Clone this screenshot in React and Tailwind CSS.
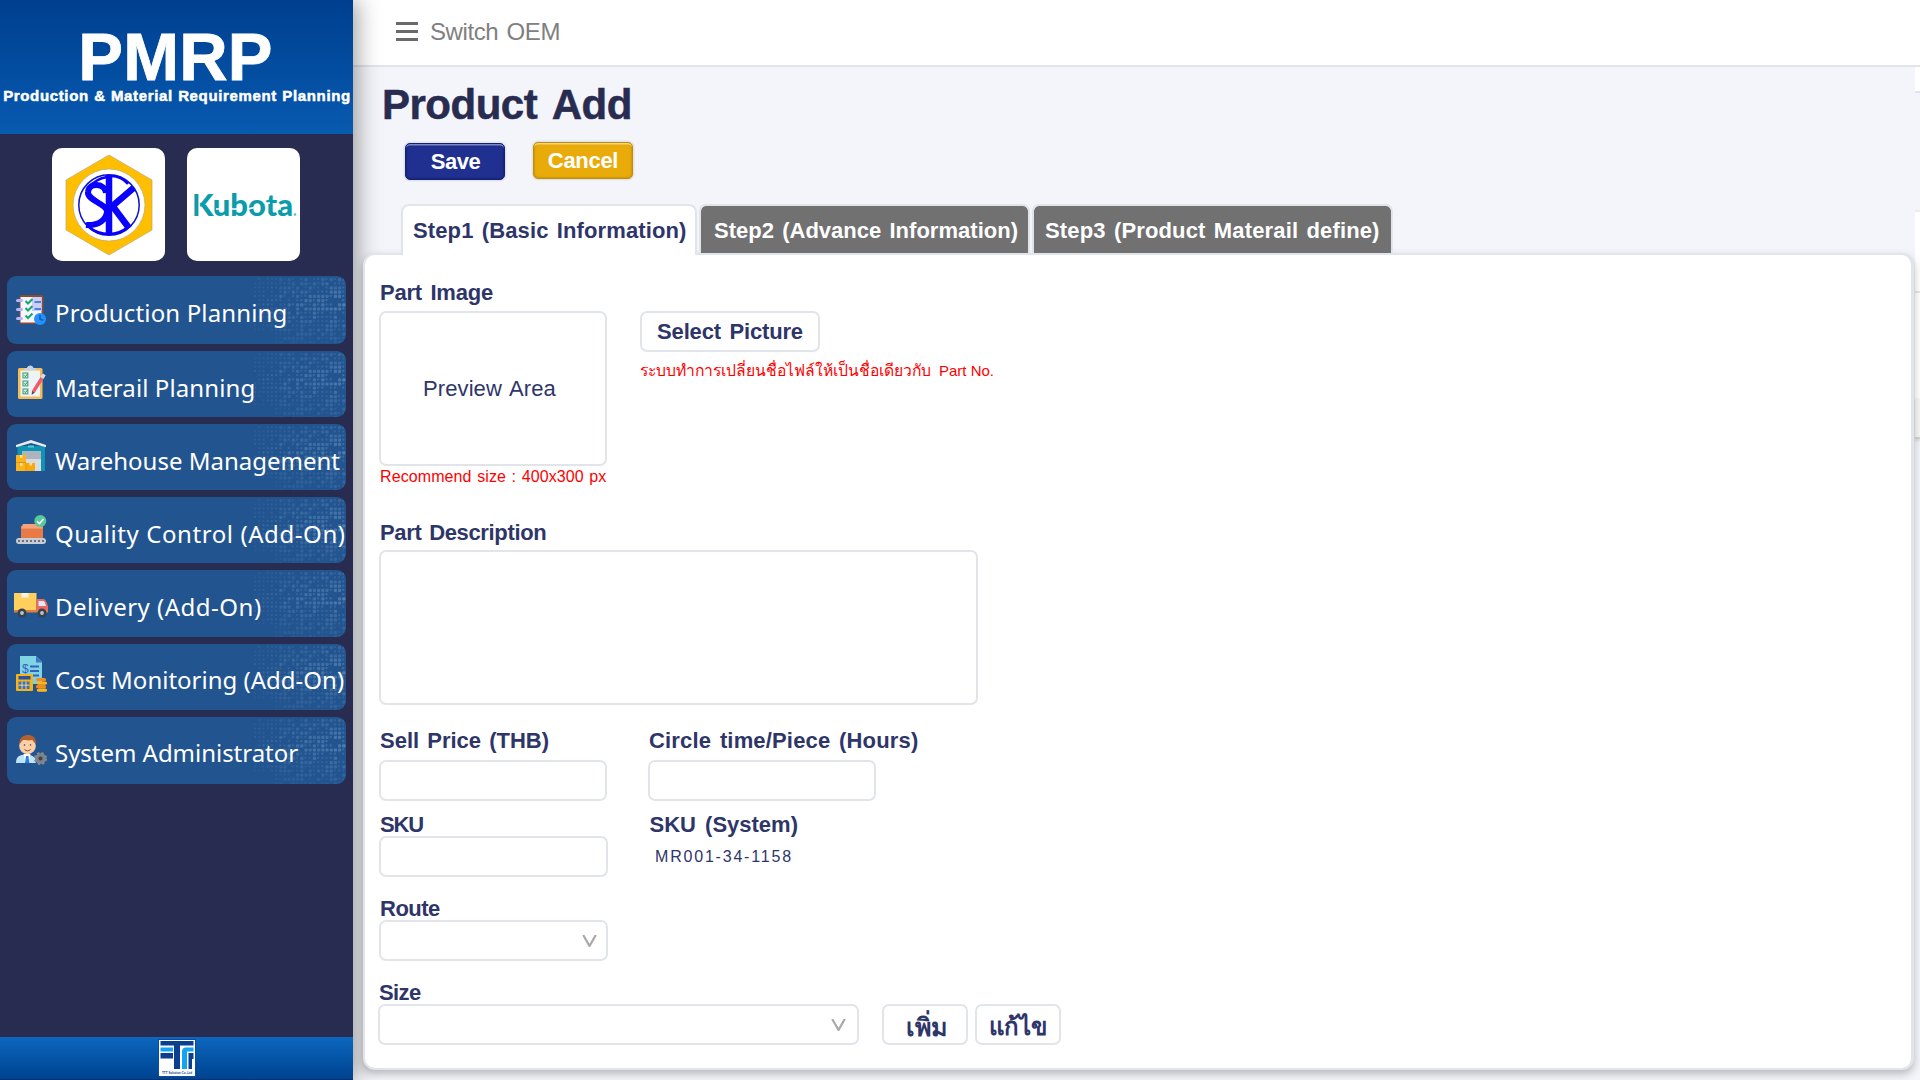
const ICONS = {
  production: (
    <svg viewBox="0 0 30 32" className="h-8 w-[30px]">
      <rect x="3.5" y="1" width="24" height="29" rx="2" fill="#8f4a2c" />
      <rect x="4.5" y="3" width="21" height="25.5" fill="#f7f5ff" />
      <path d="M16 3h9.500v14H16z" fill="#cfcdfb" />
      {[5, 14, 23].map((y) => (
        <rect key={y} x="0" y={y} width="7" height="3" rx="1.500" fill="#b9b5f5" />
      ))}
      {[7, 14, 21.5].map((y) => (
        <path key={y} d={`M9.500 ${y} l2.500 2.500 l4.500 -4.500`} fill="none" stroke="#17a866" strokeWidth="2" />
      ))}
      <path d="M18.500 8h6.500M18.500 15h6.500" stroke="#3f86ee" strokeWidth="2" />
      <circle cx="24" cy="25" r="6" fill="#2492fb" />
      <path d="M24 21v4.200l3.200 1" fill="none" stroke="#0c57c4" strokeWidth="1.500" />
    </svg>
  ),
  material: (
    <svg viewBox="0 0 30 34" className="h-[34px] w-[30px]">
      <rect x="2" y="3" width="24.500" height="31" rx="1.500" fill="#f4bb57" />
      <rect x="4.500" y="5.500" width="19.500" height="26" fill="#eef3f8" />
      <path d="M8 5c0-2 2-2 3-2 .5-3.500 6-3.500 6.500 0 1 0 3 0 3 2z" fill="#c3d5e6" />
      {[8, 16, 24].map((y) => (
        <g key={y}>
          <rect x="7" y={y} width="4.800" height="4.800" fill="#d4efe2" stroke="#5cab8c" strokeWidth="1.300" />
          <path d={`M8.200 ${y + 2.4} l1.200 1.200 l2-2.500`} fill="none" stroke="#2e8b66" />
        </g>
      ))}
      <path d="M17.500 26.500 26 13" stroke="#ef5a6c" strokeWidth="3.400" />
      <path d="M26 13l2.300-3.700" stroke="#d9dee6" strokeWidth="3.400" />
      <path d="M15.600 30l.5-4.300 2.800 1.800z" fill="#5d4a55" />
    </svg>
  ),
  warehouse: (
    <svg viewBox="0 0 30 32" className="h-8 w-[30px]">
      <path d="M1.500 6h27.500v25h-27.500z" fill="#0e93b4" />
      <path d="M0 5 15 0l15 5v2.300L15 3 0 7.300z" fill="#e6ecf1" />
      <path d="M12 6.500h6" stroke="#4fd0d6" strokeWidth="2" />
      <path d="M6 11h19v20H6z" fill="#d7dce1" />
      <path d="M6 11h19v8H6z" fill="#adb4bb" />
      <rect x="0" y="15" width="10" height="16" fill="#fbb51c" />
      <rect x="10" y="23" width="9" height="8" fill="#f8a90f" />
      <path d="M4 15h2.500v3H4zM4 23h2.500v3H4zM13.500 23h2.500v2.500h-2.500z" fill="#ffe08a" />
      <path d="M0 22.500h10M10 23v8" stroke="#dd8d0c" strokeWidth=".8" />
    </svg>
  ),
  quality: (
    <svg viewBox="0 0 31 30" className="h-[30px] w-[31px]">
      <path d="M5 11h22v13H5z" fill="#e87a47" />
      <path d="M7 9h18l2 4.500H5z" fill="#f6a37b" />
      <rect x="0" y="23" width="30" height="6" rx="3" fill="#c8ccd4" />
      {[3, 7, 11, 15, 19, 23, 27].map((x) => (
        <circle key={x} cx={x} cy="26" r="1.100" fill="#555b6b" />
      ))}
      <circle cx="24.300" cy="6" r="6" fill="#58c99b" />
      <path d="M21 6.200l2.500 2.500 4-4.700" fill="none" stroke="#fff" strokeWidth="1.500" />
    </svg>
  ),
  delivery: (
    <svg viewBox="0 0 34 26" className="h-[26px] w-[34px]">
      <path d="M0 1h22.500v19H0z" fill="#ffd05b" />
      <path d="M7.500 1h7v4.500h-7z" fill="#fbf3e0" />
      <path d="M22.500 7h7c2 0 4.500 6 4.500 8v5H22.500z" fill="#f4655f" />
      <path d="M24.500 9h5c1 0 2 3 2.500 5h-7.500z" fill="#d7eef8" />
      <path d="M0 18h34v2.500H0z" fill="#e0803c" />
      {[8, 28].map((x) => (
        <g key={x}>
          <circle cx={x} cy="21" r="4.500" fill="#37424f" />
          <circle cx={x} cy="21" r="1.900" fill="#b7c6d1" />
        </g>
      ))}
    </svg>
  ),
  cost: (
    <svg viewBox="0 0 31 36" className="h-9 w-[31px]">
      <path d="M4 0h16l6 6v22H4z" fill="#7fd4e4" />
      <path d="M20 0l6 6.500h-6z" fill="#3c74c9" />
      <path d="M14 10.500h9M14 15h9M17 19.500h6" stroke="#3561bd" strokeWidth="1.800" />
      <text x="6" y="16.500" fontFamily="Liberation Sans" fontSize="12" fill="#3561bd">$</text>
      <rect x="0" y="18" width="17" height="17" rx="1" fill="#f7b512" />
      <rect x="2.500" y="20" width="12" height="3.500" fill="#2b52a5" />
      <path d="M2.500 25.500h11v7.500h-11z" fill="#3c6fc0" />
      <path d="M6 25.500v7.500M10 25.500v7.500M2.500 29.200h11" stroke="#f1d884" />
      {[22, 25.5, 29, 32.5].map((y, i) => (
        <rect key={y} x={i % 2 ? 21 : 20} y={y} width="10" height="3.300" rx="1.600" fill={i % 2 ? "#ffb61a" : "#f98b18"} />
      ))}
    </svg>
  ),
  admin: (
    <svg viewBox="0 0 31 30" className="h-[30px] w-[31px]">
      <path d="M0 28c0-7 4-8 10-8.500 5 .5 10 1 10 8.500z" fill="#bfe4fa" />
      <path d="M7.500 19h7l-2 9h-3z" fill="#fff" />
      <path d="M10 21h2.500l.8 7H9z" fill="#2c7fdc" />
      <circle cx="11.500" cy="11" r="8.300" fill="#fbd0a8" />
      <path d="M3.500 9C3 2 8 0 12 0s8.500 2 8 9c-2-1-3-4-4-4-3 1-8 0-9 0-1.500 1-2 3-3.500 4z" fill="#b4602f" />
      <path d="M8.500 14.500c2 1.800 4 1.800 6 0" fill="none" stroke="#8a4a2a" />
      <circle cx="8.500" cy="10" r=".8" fill="#5a3520" />
      <circle cx="14.500" cy="10" r=".8" fill="#5a3520" />
      <circle cx="24.500" cy="23.500" r="5.300" fill="#8a8f94" stroke="#858a90" strokeWidth="2.600" strokeDasharray="2.300 1.900" />
      <circle cx="24.500" cy="23.500" r="4.200" fill="#7d8287" />
      <circle cx="24.500" cy="23.500" r="2" fill="#3e444b" />
    </svg>
  ),
};

const MENU = [
  { label: "Production Planning", icon: "production", box: "h-[68px]", ic: "mt-[18px] ml-[9px] w-[39px]", tx: "mt-[21px] tracking-[0.15px]" },
  { label: "Materail Planning", icon: "material", box: "h-[66px]", ic: "mt-3.5 ml-[9px] w-[39px]", tx: "mt-[21px] tracking-[0.1px]" },
  { label: "Warehouse Management", icon: "warehouse", box: "h-[66px]", ic: "mt-4 ml-[9px] w-[39px]", tx: "mt-[21px]" },
  { label: "Quality Control (Add-On)", icon: "quality", box: "h-[66px]", ic: "mt-[18px] ml-[9px] w-[39px]", tx: "mt-[21px] tracking-[0.58px]" },
  { label: "Delivery (Add-On)", icon: "delivery", box: "h-[67px]", ic: "mt-[22px] ml-[7px] w-[41px]", tx: "mt-[21px] tracking-[0.5px]" },
  { label: "Cost Monitoring (Add-On)", icon: "cost", box: "h-[66px]", ic: "mt-3 ml-[9px] w-[39px]", tx: "mt-5" },
  { label: "System Administrator", icon: "admin", box: "h-[67px]", ic: "mt-[18px] ml-[9px] w-[39px]", tx: "mt-5 tracking-[-0.03px]" },
];

const DOTS = [];
for (let c = 0; c < 22; c++) {
  for (let r = 0; r < 16; r++) {
    const n = Math.abs(Math.sin(c * 12.9898 + r * 78.233) * 43758.5453) % 1;
    const band = 1 - Math.abs(r - 6) / 13;
    const o = (0.17 + (c / 22) * 0.26) * band * (0.55 + n * 0.5);
    if (n > 0.1 && !(c < 5 && r > 12)) DOTS.push([c * 4.2 + 1, r * 4.2 + 2, o, n > 0.5 && c > 5 ? 3.2 : 2.2]);
  }
}

function Halftone() {
  return (
    <svg viewBox="0 0 93 67" className="absolute top-0 right-0 h-[67px] w-[93px]">
      {DOTS.map(([x, y, o, s], i) => (
        <rect key={i} x={x} y={y} width={s} height={s} rx="1" fill="#8fb6dc" opacity={o} />
      ))}
    </svg>
  );
}

function MenuItem({ item }) {
  return (
    <a className={`relative flex items-start overflow-hidden rounded-[9px] bg-[#22548f] ${item.box}`}>
      <Halftone />
      <span className={`shrink-0 ${item.ic}`}>{ICONS[item.icon]}</span>
      <span className={`relative whitespace-nowrap font-['Noto_Sans',sans-serif] text-2xl leading-8 text-white ${item.tx}`}>
        {item.label}
      </span>
    </a>
  );
}

function Sidebar() {
  return (
    <aside className="relative flex h-[1080px] w-[353px] shrink-0 flex-col bg-[#282c50] shadow-[4px_0_22px_rgba(0,0,0,0.38)]">
      <div className="flex h-[134px] shrink-0 flex-col items-center bg-gradient-to-b from-[#003f8f] to-[#085ab0] pt-8 whitespace-nowrap text-white">
        <div className="pr-0.5 text-[67px] leading-[50px] font-bold tracking-[0.2px] [-webkit-text-stroke:0.8px_white]">PMRP</div>
        <div className="mt-[5px] pl-px text-[15px] leading-[18px] font-bold tracking-[0.65px] [word-spacing:0.5px] [-webkit-text-stroke:0.5px_white]">
          Production &amp; Material Requirement Planning
        </div>
      </div>
      <div className="mt-3.5 flex gap-[22px] pl-[52px]">
        <div className="flex size-[113px] items-center justify-center rounded-[10px] bg-white">
          <svg viewBox="0 0 88 102" className="h-[102px] w-[88px]">
            <path d="M44 1 87 26v50L44 101 1 76V26z" fill="#ffbf00" stroke="#b9a878" strokeWidth=".7" />
            <circle cx="44" cy="51" r="36" fill="#fff" stroke="#b9a878" strokeWidth=".7" />
            <circle cx="44" cy="51" r="30.200" fill="#fff" stroke="#0d12c8" strokeWidth="1.500" />
            <g fill="none" stroke="#0a00ff">
              <path d="M44 21v60" strokeWidth="6.500" />
              <path d="M44 55 68.500 34M46 50l18 24" strokeWidth="6.500" />
              <path d="M41 39C40 29 24 28 23 38c-1 8 18 12 19 19 0 8-8 15-21 14" strokeWidth="6" />
              <path d="M23 34c6-7 12-10 19-11M46 22c7 0 13 3 17 8M24 73c6 5 12 7 20 7s13-2 19-7" strokeWidth="2.500" />
            </g>
          </svg>
        </div>
        <div className="flex size-[113px] items-center justify-center rounded-[10px] bg-white">
          <svg viewBox="0 0 112 44" className="h-11 w-28">
            <text x="4" y="33" fontFamily="Lato, sans-serif" fontWeight="900" fontSize="31" textLength="101" lengthAdjust="spacingAndGlyphs" fill="#0a9cab">Kubota</text>
            <path d="M11.300 9v25M28 26h6M43 26h6M60 26l8-2M82 20h-5M88 26h5" stroke="#fff" strokeWidth="1.700" />
            <circle cx="107" cy="31.500" r="1.300" fill="#5fb9c1" />
          </svg>
        </div>
      </div>
      <nav className="mt-[15px] flex flex-col gap-[7px] px-[7px]">
        {MENU.map((m) => (
          <MenuItem key={m.label} item={m} />
        ))}
      </nav>
      <div className="mt-auto flex h-[43px] shrink-0 justify-center border-b border-[#06336e] bg-gradient-to-b from-[#0d67be] to-[#004390] pt-0.5">
        <svg viewBox="0 0 38 38" className="size-[38px]">
          <path d="M0 0h38v38H0z" fill="#0a4b9c" />
          <path d="M1 1h36v36H1z" fill="#fff" />
          <path d="M2.500 2h33v4.500h-33z" fill="#0b3f92" />
          <path d="M2.500 8.500H15v4H2.500zM24 13c0-3 1-4.500 4-4.500h7.500v4H29V30h-5z" fill="#12a3f5" />
          <path d="M2.500 14H15v5.500H2.500zM16 6h6v24h-6zM30.500 14h5v6h-1.500v10h-3.500z" fill="#0b3f92" />
          <text x="4" y="34.500" fontFamily="Liberation Sans" fontWeight="bold" fontSize="3" textLength="30" lengthAdjust="spacingAndGlyphs" fill="#0b3f92">TTT Solution Co.,Ltd</text>
        </svg>
      </div>
    </aside>
  );
}

const FIELD = "rounded-[7px] border-2 border-[#e1e5ea] bg-white";

function Label({ children, className = "" }) {
  return <div className={`text-[22px] leading-6 font-bold whitespace-nowrap ${className}`}>{children}</div>;
}

function Select({ className }) {
  return (
    <div className={`flex h-[41px] items-center justify-end ${FIELD} ${className}`}>
      <svg viewBox="0 0 15 12" className="h-3 w-[15px]">
        <path d="M1.200 0l6.300 11L13.800 0" fill="none" stroke="#a9a9a9" strokeWidth="2.200" />
      </svg>
    </div>
  );
}

function Tabs() {
  const dark = "rounded-t-[7px] border-x-2 border-t-2 border-[#e1e4e9] bg-[#717171] bg-clip-padding h-[49px] text-white";
  return (
    <div className="relative mt-6 ml-12 flex items-start whitespace-nowrap text-[22px] font-bold leading-6 [word-spacing:2px]">
      <div className="h-[51px] w-[296px] rounded-t-[8px] border-x-2 border-t-2 border-[#e1e4e9] bg-white pt-[13px] pl-2.5 tracking-[0.12px]">Step1 (Basic Information)</div>
      <div className={`ml-0.5 w-[331px] pt-[13px] pl-[13px] tracking-[0.02px] ${dark}`}>Step2 (Advance Information)</div>
      <div className={`ml-0.5 w-[361px] pt-[13px] pl-[11px] tracking-[0.15px] ${dark}`}>Step3 (Product Materail define)</div>
    </div>
  );
}

function ProductForm() {
  return (
    <section className="relative -mt-0.5 ml-2.5 h-[817px] w-[1551px] rounded-[12px] border-2 border-r-[3px] border-[#e1e4e9] bg-white pt-[26px] pl-3.5 shadow-[0_4px_8px_rgba(0,0,0,0.25)]">
      <Label className="pl-px tracking-[-0.2px] [word-spacing:2.5px]">Part Image</Label>
      <div className="mt-1.5 flex items-start">
        <div>
          <div className={`flex h-[155px] w-[228px] items-center pl-[42px] text-[22px] leading-6 tracking-[0.1px] [word-spacing:2px] ${FIELD}`}>Preview Area</div>
          <div className="mt-px h-5 pl-px text-base leading-5 whitespace-nowrap tracking-[0.1px] [word-spacing:1px] text-[#ff0000]">Recommend size : 400x300 px</div>
        </div>
        <div className="ml-[33px]">
          <button className={`flex h-[41px] w-[180px] items-center justify-center text-[22px] font-bold tracking-[-0.15px] [word-spacing:2.5px] ${FIELD}`}>Select Picture</button>
          <div className="mt-[9px] flex h-5 leading-5 whitespace-nowrap text-[#ff0000]">
            <span className="w-[299px] text-[15.700px]">ระบบทำการเปลี่ยนชื่อไฟล์ให้เป็นชื่อเดียวกับ</span>
            <span className="text-[15px]">Part No.</span>
          </div>
        </div>
      </div>

      <Label className="mt-[34px] pl-px tracking-[-0.35px] [word-spacing:2px]">Part Description</Label>
      <div className={`mt-[5px] h-[155px] w-[599px] ${FIELD}`} />

      <div className="mt-6 grid grid-cols-[269px_auto]">
        <div>
          <Label className="pl-px [word-spacing:2px]">Sell Price (THB)</Label>
          <div className={`mt-[7px] h-[41px] w-[228px] ${FIELD}`} />
        </div>
        <div>
          <Label className="pl-px tracking-[0.16px] [word-spacing:2.500px]">Circle time/Piece (Hours)</Label>
          <div className={`mt-[7px] h-[41px] w-[228px] ${FIELD}`} />
        </div>
      </div>

      <div className="mt-3 grid grid-cols-[269px_auto]">
        <div>
          <Label className="pl-px tracking-[-1.200px]">SKU</Label>
          <div className={`-mt-px h-[41px] w-[229px] ${FIELD}`} />
        </div>
        <div>
          <Label className="pl-[1.500px] [word-spacing:3px]">SKU (System)</Label>
          <div className="mt-2.5 pl-[7px] text-base leading-5 tracking-[1.800px]">MR001-34-1158</div>
        </div>
      </div>

      <Label className="mt-5 pl-px tracking-[-0.500px]">Route</Label>
      <Select className="-mt-px w-[229px] pr-[9px]" />

      <Label className="mt-5 tracking-[-0.600px]">Size</Label>
      <div className="-mt-px -ml-px flex">
        <Select className="w-[481px] pr-[11px]" />
        <button className={`ml-[23px] flex h-[41px] w-[86px] items-center justify-center pl-0.5 pt-1 font-['Liberation_Sans',sans-serif] text-[25px] leading-8 font-bold ${FIELD}`}>เพิ่ม</button>
        <button className={`ml-[7px] flex h-[41px] w-[86px] items-center justify-center pt-1 font-['Liberation_Sans',sans-serif] text-2xl leading-8 font-bold ${FIELD}`}>แก้ไข</button>
      </div>
    </section>
  );
}

function EdgeStrip() {
  return (
    <div className="flex w-[5px] shrink-0 flex-col">
      <div className="h-[25px] border-b border-[#e1e4e9] bg-white" />
      <div className="h-[120px] border-b-2 border-[#ebebee] border-t border-t-[#e1e4e9]" />
      <div className="h-[79px] bg-white" />
      <div className="h-[107px] border-t-2 border-[#e3e5e8] bg-white" />
      <div className="h-[41px] border-b-2 border-[#d2d3d5] bg-[#f6f6f7] shadow-[0_2px_3px_rgba(0,0,0,0.12)]" />
    </div>
  );
}

export default function App() {
  return (
    <div className="flex h-[1080px] w-[1920px] overflow-hidden bg-[#f4f5fa] font-['Liberation_Sans',sans-serif] text-[#2e3569]">
      <Sidebar />
      <main className="flex h-[1080px] min-w-0 flex-1 flex-col">
        <header className="flex h-[67px] shrink-0 items-start border-b-2 border-[#e1e4e9] bg-white pl-[43px]">
          <div className="mt-[22px] flex w-[22px] flex-col gap-[5px]">
            <div className="h-[3px] bg-[#6a6a6a]" />
            <div className="h-[3px] bg-[#6a6a6a]" />
            <div className="h-[3px] bg-[#6a6a6a]" />
          </div>
          <div className="mt-[18px] ml-3 text-2xl leading-7 tracking-[-0.4px] [word-spacing:2px] text-[#808080]">Switch OEM</div>
        </header>
        <div className="flex min-h-0 flex-1">
          <div className="min-w-0 flex-1">
            <h1 className="pt-4 pl-[29px] text-[42px] leading-[44px] font-bold tracking-[-0.5px] [word-spacing:5px] text-[#282c50] [-webkit-text-stroke:0.5px_#282c50]">Product Add</h1>
            <div className="mt-[15px] flex h-[38px] gap-7 pl-[52px] text-[22px] leading-6 font-bold text-white">
              <button className="mt-px flex h-[37px] w-[100px] items-start justify-center rounded-[5px] border border-[#15206f] bg-[#203090] pt-1.5 pl-px tracking-[-0.5px] shadow-[0_0_0_1.5px_#e1e4e9,inset_0_2px_0_-0.5px_#7f88c4,inset_0_0_2px_1px_#18257c]">Save</button>
              <button className="flex h-[37px] w-[100px] items-start justify-center rounded-[5px] border border-[#c08d06] bg-[#e9ab0a] pt-1.5 tracking-[-0.3px] shadow-[0_0_0_1.5px_#e1e4e9,inset_0_2px_0_-0.5px_#f6d684,inset_0_0_2px_1px_#cf9707]">Cancel</button>
            </div>
            <div className="isolate">
              <div className="relative z-10"><Tabs /></div>
              <ProductForm />
            </div>
          </div>
          <EdgeStrip />
        </div>
      </main>
    </div>
  );
}
